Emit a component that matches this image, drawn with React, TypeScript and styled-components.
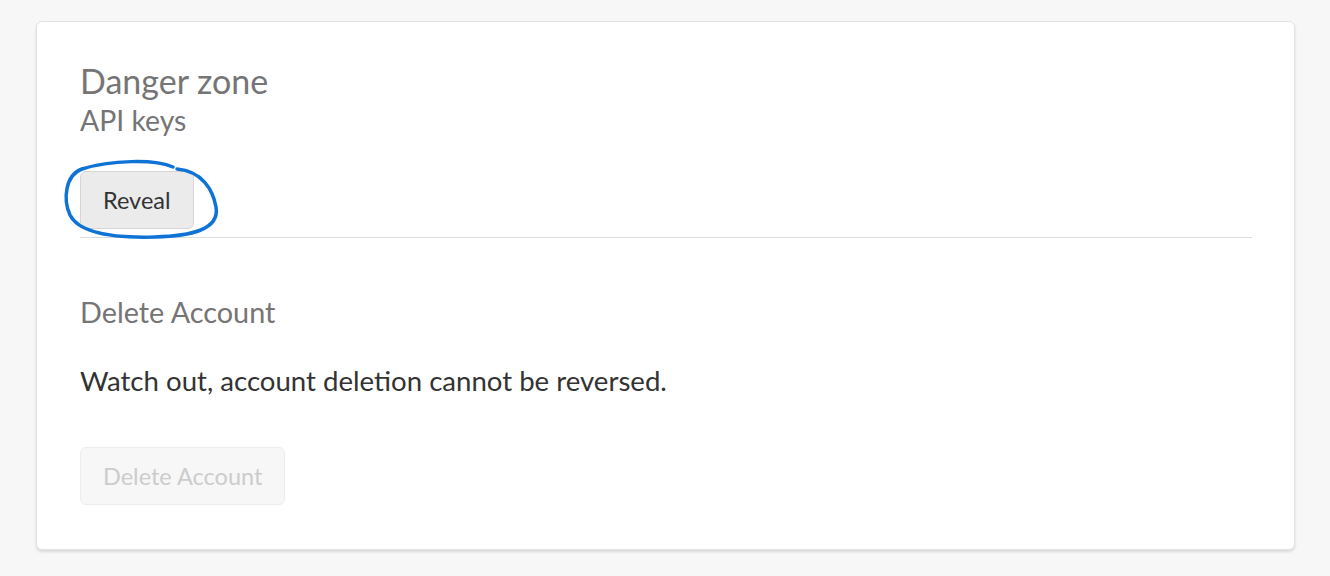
import styled, { createGlobalStyle } from 'styled-components';

const GlobalStyle = createGlobalStyle`
  html, body {
    margin: 0;
    padding: 0;
    background-color: #f7f7f7;
    font-family: Lato, "Noto Sans", sans-serif;
  }
`;

function ScribbleCircle() {
  return (
    <Scribble width="165" height="90" viewBox="0 0 165 90" fill="none">
      <path
        d="M113 12 C95 4 50 5 22 14 C5 20 3 45 10 60 C20 80 60 83 95 82 C130 81 160 75 156 52 C153 35 142 16 117 14"
        stroke="#0f73d6"
        strokeWidth="3.5"
        strokeLinecap="round"
        strokeLinejoin="round"
      />
    </Scribble>
  );
}

function App() {
  return (
    <>
      <GlobalStyle />
      <Page>
        <Card>
          <Title>Danger zone</Title>
          <SubTitle>API keys</SubTitle>
          <RevealWrap>
            <Button type="button">Reveal</Button>
            <ScribbleCircle />
          </RevealWrap>
          <Divider />
          <SectionTitle>Delete Account</SectionTitle>
          <Warning>Watch out, account deletion cannot be reversed.</Warning>
          <DeleteButton type="button" disabled>
            Delete Account
          </DeleteButton>
        </Card>
      </Page>
    </>
  );
}

const Page = styled.main`
  padding: 21px 35px 26px 36px;
`;

const Card = styled.section`
  display: flex;
  flex-direction: column;
  align-items: flex-start;
  background-color: #ffffff;
  border: 1px solid #e2e2e2;
  border-radius: 6px;
  box-shadow: 0 2px 3px rgba(0, 0, 0, 0.12);
  padding: 39px 42px 43px 43px;
  height: 529px;
  box-sizing: border-box;
`;

const Title = styled.h2`
  margin: 0;
  font-size: 34px;
  font-weight: 400;
  line-height: 40px;
  color: #757575;
`;

const SubTitle = styled.h3`
  margin: 3px 0 0;
  font-size: 28.4px;
  font-weight: 400;
  line-height: 32px;
  color: #757575;
`;

const RevealWrap = styled.div`
  position: relative;
  margin-top: 35px;
`;

const Scribble = styled.svg`
  position: absolute;
  left: -20px;
  top: -16px;
  pointer-events: none;
`;

const Button = styled.button`
  display: inline-flex;
  align-items: center;
  justify-content: center;
  height: 58px;
  padding: 0 22px;
  font-family: inherit;
  font-size: 23.5px;
  color: #333333;
  background-color: #ebebeb;
  border: 1px solid #d6d6d6;
  border-radius: 6px;

  &:disabled {
    color: #cccccc;
    background-color: #f7f7f7;
    border-color: #ededed;
  }
`;

const DeleteButton = styled(Button)`
  margin-top: 48px;
`;

const Divider = styled.hr`
  align-self: stretch;
  margin: 8px 0 0;
  border: none;
  border-top: 1px solid #dddddd;
`;

const SectionTitle = styled.h3`
  margin: 56px 0 0;
  font-size: 28.8px;
  font-weight: 400;
  line-height: 36px;
  color: #757575;
`;

const Warning = styled.p`
  margin: 33px 0 0;
  font-size: 27.6px;
  line-height: 36px;
  color: #333333;
`;

export default App;
